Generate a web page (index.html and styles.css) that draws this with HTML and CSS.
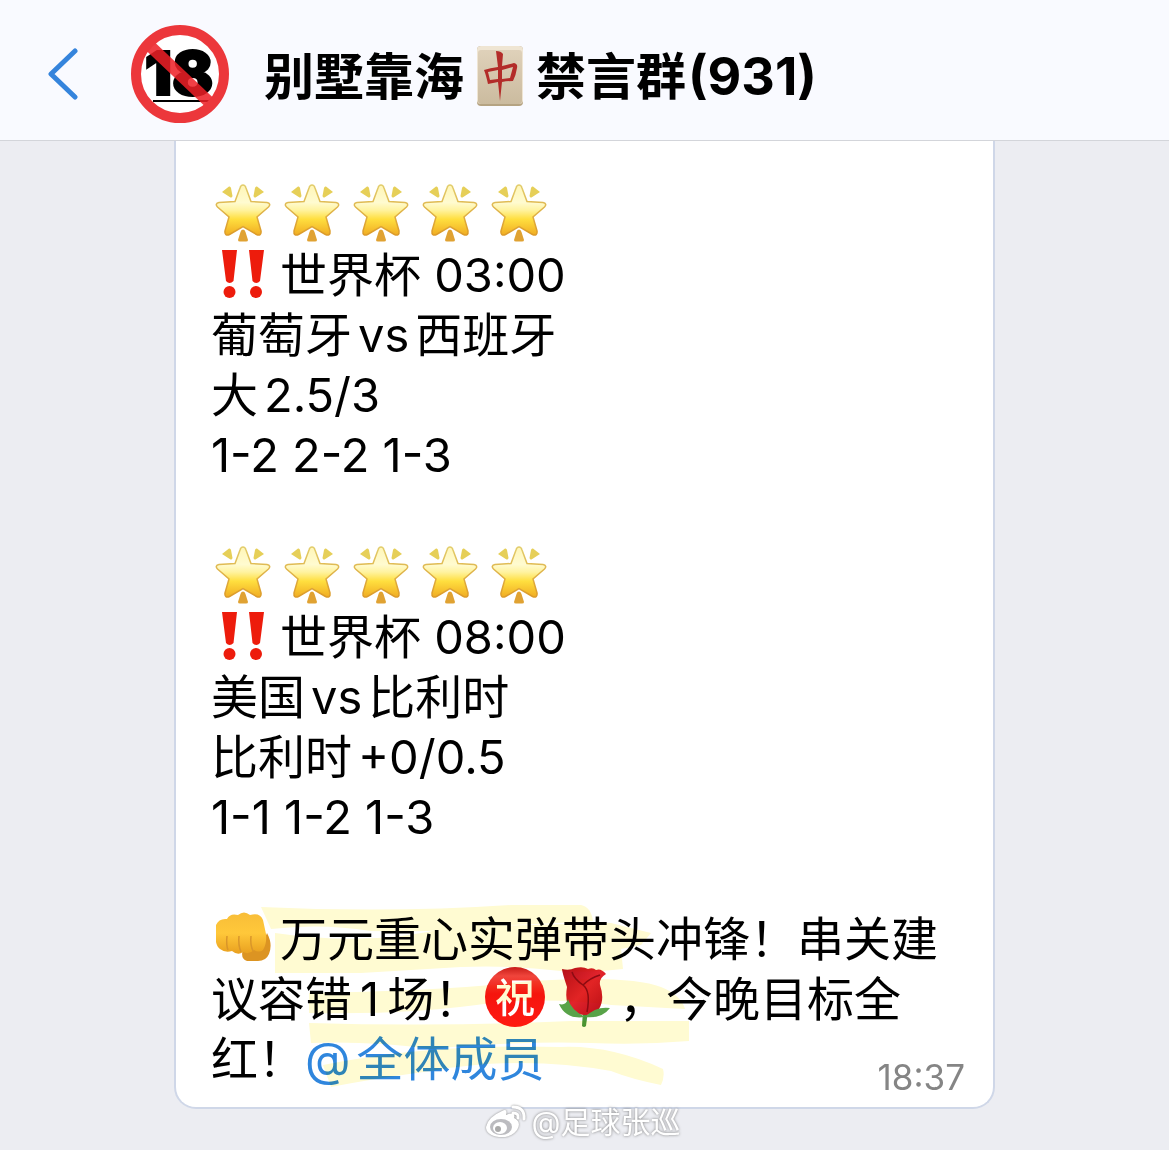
FILE: index.html
```html
<!DOCTYPE html>
<html lang="zh-CN">
<head>
<meta charset="utf-8">
<meta name="viewport" content="width=device-width, initial-scale=1">
<title>别墅靠海🀄禁言群</title>
<link rel="stylesheet" href="styles.css">
</head>
<body>
<svg class="defs" aria-hidden="true">
  <defs>
    <linearGradient id="gold" x1="0" y1="0" x2="0" y2="1">
      <stop offset="0" stop-color="#fff6b8"/><stop offset=".35" stop-color="#fffbd0"/><stop offset=".5" stop-color="#fff3a0"/>
      <stop offset=".68" stop-color="#ffdf3f"/><stop offset="1" stop-color="#f0ac22"/>
    </linearGradient>
    <linearGradient id="edge" x1="0" y1="0" x2="0" y2="1">
      <stop offset="0" stop-color="#e2cd6c"/><stop offset="1" stop-color="#dc9a28"/>
    </linearGradient>
    <linearGradient id="tile" x1="0" y1="0" x2="0" y2="1">
      <stop offset="0" stop-color="#dfd1ba"/><stop offset="1" stop-color="#cbbb9f"/>
    </linearGradient>
    <linearGradient id="skin" x1="0" y1="0" x2="0" y2="1">
      <stop offset="0" stop-color="#f8bd38"/><stop offset=".5" stop-color="#ffc83a"/><stop offset="1" stop-color="#e9a01f"/>
    </linearGradient>
    <linearGradient id="badge" x1="0" y1="0" x2="0" y2="1">
      <stop offset="0" stop-color="#c81d18"/><stop offset=".15" stop-color="#f0453c"/><stop offset=".45" stop-color="#f5150f"/><stop offset="1" stop-color="#ff1a12"/>
    </linearGradient>
    <linearGradient id="petal" x1="0" y1="0" x2="1" y2="1">
      <stop offset="0" stop-color="#b30f19"/><stop offset=".5" stop-color="#e2242c"/><stop offset="1" stop-color="#b50d17"/>
    </linearGradient>
    <symbol id="star" viewBox="0 0 60 60">
      <path d="M30 2 C31.500 2 32.500 3 33 5 L38 18.500 L54 19.500 C57 20 57.500 22 55.500 24 L44 34 L48 48 C48.500 51.500 46.500 53 43.500 51.500 L30 43.500 L16.500 51.500 C13.500 53 11.500 51.500 12 48 L16 34 L4.500 24 C2.500 22 3 20 6 19.500 L22 18.500 L27 5 C27.500 3 28.500 2 30 2Z" fill="url(#gold)" stroke="url(#edge)" stroke-width="1.500"/>
      <path d="M9 9 L16 3.500 Q17.500 3 18 5 L19.500 13 Q19 15 17.500 14.500Z M51 9 L44 3.500 Q42.500 3 42 5 L40.500 13 Q41 15 42.500 14.500Z" fill="#e6cf58"/>
      <path d="M30 46.500 Q32 46.500 32.500 49 L35 57 Q35 58.500 33 58.500 H27 Q25 58.500 25 57 L27.500 49 Q28 46.500 30 46.500Z" fill="#e0a232"/>
    </symbol>
    <symbol id="bangs" viewBox="0 0 60 60">
      <g fill="#ed1c0c"><path d="M9 7 H24 L20.500 38 Q16.500 42 13 38Z M36 7 H51 L47 38 Q43.500 42 39.500 38Z"/>
      <circle cx="16.500" cy="49" r="6"/><circle cx="43" cy="49" r="6"/></g>
    </symbol>
  </defs>
</svg>

<header class="topbar">
  <button class="back" type="button" aria-label="返回">
    <svg viewBox="0 0 30 52" width="30" height="52"><path d="M27 3 L3 26 L27 49" fill="none" stroke="#3584dc" stroke-width="5" stroke-linecap="round" stroke-linejoin="round"/></svg>
  </button>
  <svg class="avatar" viewBox="0 0 98 98" role="img" aria-label="18">
    <circle cx="49" cy="49" r="46" fill="#fff"/>
    <text class="avatar-text" x="48" y="70" text-anchor="middle">18</text>
    <path d="M22 76 H79" stroke="#000" stroke-width="2"/>
    <path d="M19 21 L78 77" stroke="#ee1f26" stroke-opacity=".86" stroke-width="12"/>
    <circle cx="49" cy="49" r="44" fill="none" stroke="#ec373b" stroke-width="10"/>
  </svg>
  <h1 class="title">别墅靠海<svg class="tile" viewBox="0 0 48 62" role="img" aria-label="🀄">
    <rect x="1" y="1" width="46" height="60" rx="4" fill="#b5a382"/>
    <rect x="1" y="1" width="46" height="58" rx="4" fill="#efe5d3"/>
    <rect x="2" y="5" width="44" height="54" rx="3" fill="url(#tile)"/>
    <path d="M20 6 Q25 6 27 9 L26 21 Q34 19 38 18 Q42 19 41 23 Q40 30 37 36 Q31 36 26 37 L24 56 L22 37 L12 39 Q10 30 8 25 Q14 23 22 22Z M12 27 L14 35 L22 34 V25Z M26 25 V34 L34 33 L37 22Z" fill="#b32c29" fill-rule="evenodd"/>
  </svg>禁言群<span class="count">(931)</span></h1>
</header>

<main class="chat">
  <article class="bubble">
    <p class="para">
      <svg class="emoji"><use href="#star"/></svg><svg class="emoji"><use href="#star"/></svg><svg class="emoji"><use href="#star"/></svg><svg class="emoji"><use href="#star"/></svg><svg class="emoji"><use href="#star"/></svg><br>
      <svg class="emoji"><use href="#bangs"/></svg>世界杯 03:00<br>
      葡萄牙<span class="latin">vs</span>西班牙<br>
      大<span class="latin">2.5/3</span><br>
      1-2 2-2 1-3
    </p>
    <p class="para">
      <svg class="emoji"><use href="#star"/></svg><svg class="emoji"><use href="#star"/></svg><svg class="emoji"><use href="#star"/></svg><svg class="emoji"><use href="#star"/></svg><svg class="emoji"><use href="#star"/></svg><br>
      <svg class="emoji"><use href="#bangs"/></svg>世界杯 08:00<br>
      美国<span class="latin">vs</span>比利时<br>
      比利时<span class="latin">+0/0.5</span><br>
      1-1 1-2 1-3
    </p>
    <div class="closing">
      <p class="para"><svg class="emoji" viewBox="0 0 60 60">
        <path d="M30 42 Q50 40 54 26 Q60 37 56 47 Q53 54 45 54 L34 54 Q27 52 30 42Z" fill="#dc9422"/>
        <path d="M3 18 Q6 11 14 12 Q17 6 25 8 Q31 3 37 8 Q47 5 50 13 L53 27 Q54 37 50 43 Q46 46 41 43 Q36 48 30 45 Q25 49 19 44 Q12 46 7 42 Q4 40 3 35Z" fill="url(#skin)"/>
        <path d="M14 29 Q13 38 15 43 M26 29 Q25 38 28 45 M38 29 Q37 38 40 44" fill="none" stroke="#d9962a" stroke-width="1.500"/>
      </svg>万元重心实弹带头冲锋！串关建议容错<span class="latin">1</span>场！<svg class="emoji" viewBox="0 0 60 60" role="img" aria-label="㊗">
        <circle cx="30" cy="30" r="30" fill="url(#badge)"/>
        <text class="badge-text" x="30" y="45" text-anchor="middle">祝</text>
      </svg><svg class="emoji" viewBox="0 0 60 60">
        <path d="M29 44 L28 59 Q30 61 32 59 L34 44Z" fill="#4b963b"/>
        <path d="M13 20 Q8 5 8 2 Q15 4 21 1 Q29 -1 34 2 Q39 0 42 3 Q47 1 52 7 Q45 11 46 18 Q51 32 45 42 Q32 53 19 44 Q10 37 13 20Z" fill="url(#petal)"/>
        <path d="M18 5 Q20 12 29 18 Q37 24 33 45 M29 18 Q36 11 46 8" fill="none" stroke="#8d0b13" stroke-width="1.500"/>
        <path d="M31 50 Q12 53 5 37 Q12 39 14 32 Q17 43 31 50 Q42 39 56 41 Q48 52 31 50Z" fill="#58a348"/>
      </svg>，今晚目标全红！<a class="mention" href="#members">@<span class="name">全体成员</span></a></p>
      <svg class="marker" viewBox="0 0 750 180" preserveAspectRatio="xMinYMin meet" aria-hidden="true">
        <path d="M50 -2 Q180 4 300 -4 L370 -4 Q380 -2 382 12 Q350 14 300 16 Q230 24 160 22 Q110 14 60 20Z"/>
        <path d="M64 24 Q160 38 240 18 L400 14 L440 24 L430 36 L410 40 L412 60 Q380 64 350 62 Q300 56 250 58 L150 64 L64 64Z"/>
        <path d="M98 84 Q230 82 320 72 Q420 66 450 78 Q470 86 474 100 L400 96 Q340 88 280 94 Q200 106 98 104Z"/>
        <path d="M98 114 Q230 118 360 112 L478 112 L478 132 Q430 136 380 134 Q300 132 220 140 Q160 132 100 134Z"/>
        <path d="M112 156 Q220 134 350 138 Q400 136 452 160 Q454 168 450 176 Q420 170 400 162 Q310 146 220 162 Q160 170 120 178Z"/>
      </svg>
    </div>
    <time class="time">18:37</time>
  </article>
  <footer class="credit">
    <svg class="weibo" viewBox="0 0 42 34" aria-hidden="true">
      <path d="M17 6 Q23 3 21 10 Q31 6 29 13 Q37 17 32 25 Q26 33 14 32 Q1 30 1 22 Q3 12 17 6Z" fill="#fff"/>
      <ellipse cx="16" cy="22" rx="11" ry="8" fill="#bcbcc0"/><ellipse cx="15" cy="23" rx="7" ry="6" fill="#fff"/>
      <circle cx="13" cy="24" r="3" fill="#aaa"/>
      <path d="M28 2 Q40 2 39 14 M28 8 Q34 8 33 13" fill="none" stroke="#fff" stroke-width="3" stroke-linecap="round"/>
    </svg>
    <span>@足球张巡</span>
  </footer>
</main>
</body>
</html>
```
FILE: styles.css
```css
* { box-sizing: border-box; }

body {
  margin: 0;
  min-height: 100vh;
  display: flex;
  flex-direction: column;
  background: #ecedf2;
  color: #000;
  font-family: Inter, "Noto Sans CJK SC", sans-serif;
}

.defs { position: absolute; width: 0; height: 0; }

.topbar {
  display: flex;
  align-items: center;
  height: 141px;
  padding: 8px 48px 0;
  background: #f9faff;
  border-bottom: 1px solid #d3d5da;
}

.back {
  display: flex;
  padding: 0;
  border: 0;
  background: none;
  cursor: pointer;
}

.avatar {
  width: 98px;
  height: 98px;
  margin: 0 35px 0 53px;
}

.avatar-text {
  font-size: 61px;
  font-weight: 900;
  stroke: #000;
  stroke-width: 2px;
}

.title {
  margin: 0;
  padding-top: 6px;
  font-size: 50px;
  line-height: 64px;
  font-weight: 700;
  white-space: nowrap;
}

.tile {
  width: 48px;
  height: 62px;
  margin: 0 12px;
  vertical-align: -12px;
}

.count {
  margin-left: 2px;
  font-size: 52px;
}

.chat {
  flex: 1;
  display: flex;
  flex-direction: column;
  padding: 0 174px;
}

.bubble {
  position: relative;
  padding: 44px 34px 18px 35px;
  background: #fff;
  border: 2px solid #cfd7e8;
  border-top: 0;
  border-radius: 0 0 22px 22px;
}

.para {
  margin: 0 0 62px;
  font-size: 47px;
  line-height: 60px;
}

.emoji {
  width: 60px;
  height: 60px;
  margin: -2px 7px 0 2px;
  vertical-align: top;
}

.badge-text {
  fill: #fff;
  font-size: 40px;
  font-weight: 500;
}

.latin { margin: 0 6px; }

.closing { position: relative; }
.closing .para { margin: 0; }
.closing .emoji { margin: -2px 5px 0 4px; }
.closing .emoji:first-child { margin: -2px 7px 0 2px; }
.closing .latin { margin: 0 8px; }

.mention { color: #2f86dd; text-decoration: none; }
.name { margin-left: 6px; }

.marker {
  position: absolute;
  inset: 0;
  width: 750px;
  height: 180px;
  overflow: visible;
  mix-blend-mode: multiply;
  pointer-events: none;
  fill: #fffbd2;
}

.time {
  position: absolute;
  right: 28px;
  bottom: 8px;
  color: #858585;
  font-size: 35px;
  line-height: 44px;
}

.credit {
  position: relative;
  display: flex;
  justify-content: center;
  align-items: center;
  gap: 5px;
  margin-top: -5px;
  padding-right: 4px;
  color: #fff;
  font-size: 30px;
  line-height: 36px;
  text-shadow: 0 0 3px #777;
}

.weibo { width: 42px; height: 34px; filter: drop-shadow(0 0 1px #888); }
```
